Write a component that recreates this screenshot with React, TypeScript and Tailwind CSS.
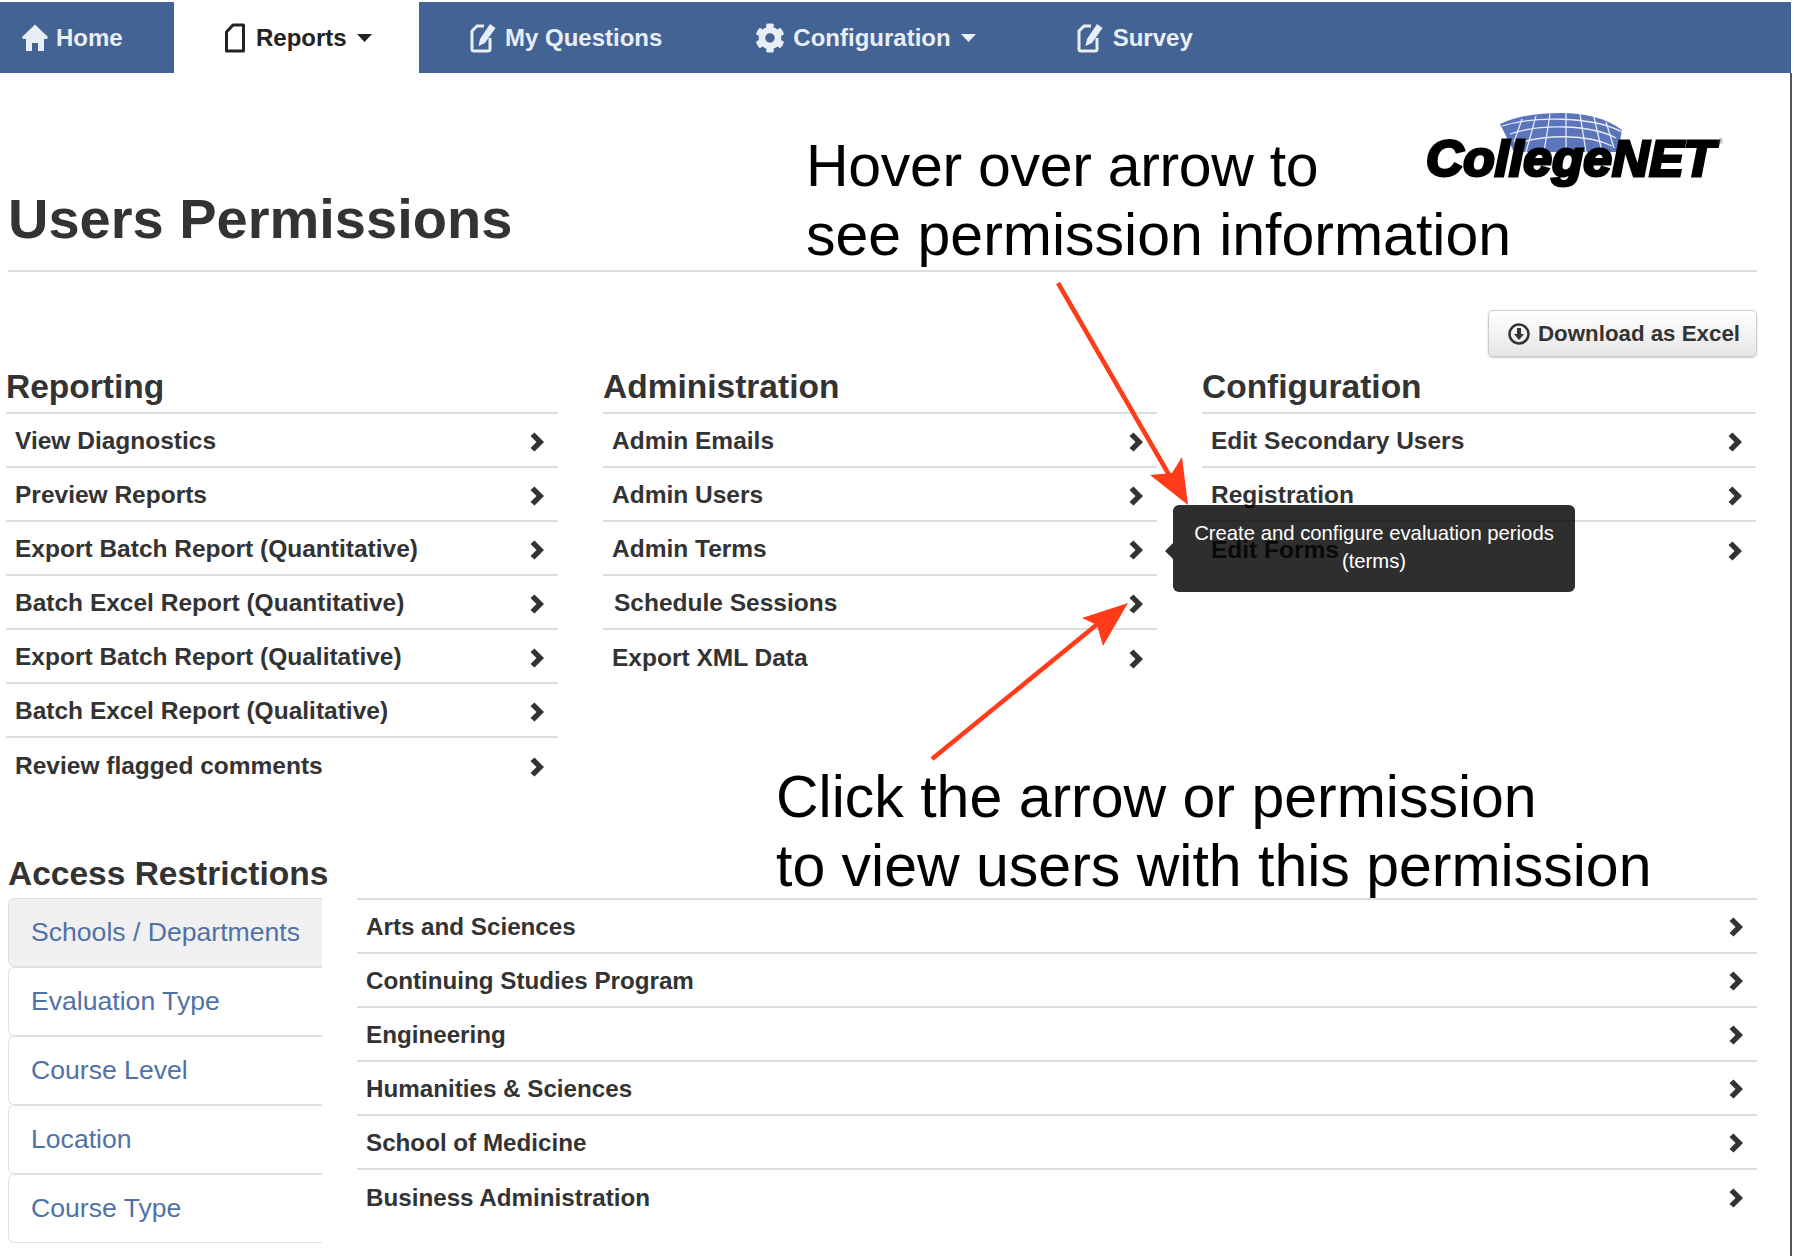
import React from "react";
import { FaCog } from "react-icons/fa";

const Chevron = ({ className }: { className: string }) => (
    <svg className={`w-[14px] h-[20px] shrink-0 ${className}`} viewBox="0 0 14 20">
        <path d="M0.500 4 4.500 0.500 14 10 4.500 19.500 0.500 16 6.500 10Z" fill="#333" />
    </svg>
);

const HomeIcon = () => (
    <svg className="w-[26px] h-[27px] mr-[8px]" viewBox="0 0 26 27">
        <path d="M13 0.500 26 13 25 15 22 15V27H16V19H10V27H4V15H1L0 13Z" fill="currentColor" />
    </svg>
);

const EditIcon = () => (
    <svg className="w-[26px] h-[30px]" viewBox="0 0 26 30" fill="none">
        <path d="M14 3H7L2 8V26a2 2 0 0 0 2 2H18a2 2 0 0 0 2-2V15" stroke="currentColor" strokeWidth="3" />
        <path d="M20 1 25.500 5 15 20 8.500 23 10 16Z" fill="currentColor" />
    </svg>
);

const ReportIcon = () => (
    <svg className="w-[22px] h-[30px]" viewBox="0 0 22 30" fill="none">
        <path d="M9 2H19.500V28H2.500V9Z" stroke="#222" strokeWidth="3" strokeLinejoin="round" />
    </svg>
);

const Caret = () => (
    <svg className="w-[15px] h-[8px] ml-[10px]" viewBox="0 0 15 8">
        <path d="M0 0H15L7.500 8Z" fill="currentColor" />
    </svg>
);

const NavTab = ({
    icon,
    label,
    caret,
    className,
}: {
    icon: React.ReactNode;
    label: string;
    caret?: boolean;
    className: string;
}) => (
    <div className={`flex items-center h-full ${className}`}>
        {icon}
        <span className="text-[24px] font-bold">{label}</span>
        {caret && <Caret />}
    </div>
);

const Row = ({
    label,
    indent,
    last,
    size,
    chevron,
}: {
    label: string;
    indent?: boolean;
    last?: boolean;
    size: string;
    chevron: string;
}) => (
    <div
        className={`flex items-center justify-between h-[54px] pl-[9px] pr-[14px] font-bold text-[#333] ${size} ${
            last ? "" : "border-b-2 border-[#ddd]"
        }`}
    >
        <span className={`mt-[3px] ${indent ? "ml-[2px]" : ""}`}>{label}</span>
        <Chevron className={chevron} />
    </div>
);

const columns = [
    {
        title: "Reporting",
        width: "w-[552px]",
        items: [
            "View Diagnostics",
            "Preview Reports",
            "Export Batch Report (Quantitative)",
            "Batch Excel Report (Quantitative)",
            "Export Batch Report (Qualitative)",
            "Batch Excel Report (Qualitative)",
            "Review flagged comments",
        ],
    },
    {
        title: "Administration",
        width: "w-[554px]",
        items: ["Admin Emails", "Admin Users", "Admin Terms", "Schedule Sessions", "Export XML Data"],
    },
    {
        title: "Configuration",
        width: "w-[554px]",
        items: ["Edit Secondary Users", "Registration", "Edit Forms"],
    },
];

const sideTabs = ["Schools / Departments", "Evaluation Type", "Course Level", "Location", "Course Type"];

const schools = [
    "Arts and Sciences",
    "Continuing Studies Program",
    "Engineering",
    "Humanities & Sciences",
    "School of Medicine",
    "Business Administration",
];

const Logo = () => (
    <div className="absolute left-[1423px] top-[112px] w-[304px] h-[78px]">
        <svg className="absolute left-[77px] top-0 w-[124px] h-[40px]" viewBox="0 0 124 40" fill="none">
            <path d="M0 12C20 3 40 1 62 1s44 5 60 17L118 40H14Z" fill="#5c74ba" />
            <g stroke="#e6eaf6" strokeWidth="1.300">
                <path d="M2 14C34 4 92 4 122 20M10 22C40 12 90 12 116 26M16 32C44 22 88 22 112 34" />
                <path d="M66 1V40M50 2 44 40M36 4 26 40M22 7 14 30M80 2 86 40M94 5 102 40M106 10 114 36" />
            </g>
        </svg>
        <span className="absolute left-[3px] top-[18px] text-[50px] leading-[58px] font-bold italic origin-left scale-x-[1.03] text-black [-webkit-text-stroke:3px_black] whitespace-nowrap">
            CollegeNET
        </span>
        <span className="absolute left-[295px] top-[26px] text-[7px] leading-[8px] text-[#777]">®</span>
    </div>
);

const Arrows = () => (
    <svg className="absolute left-0 top-0 w-[1794px] h-[1256px] pointer-events-none" viewBox="0 0 1794 1256" fill="none">
        <path d="M1058 283 1172 480" stroke="#ff3b1a" strokeWidth="4.500" />
        <path d="M1188 505 1150 475 1172 473 1182 457Z" fill="#ff3b1a" />
        <path d="M932 759 1100 622" stroke="#ff3b1a" strokeWidth="4.500" />
        <path d="M1128 603 1082 618 1097 625 1103 646Z" fill="#ff3b1a" />
    </svg>
);

const App = () => {
    return (
        <div
            className="relative w-[1794px] h-[1256px] overflow-hidden bg-white text-[#333]"
            style={{ fontFamily: '"Liberation Sans", Arial, sans-serif' }}
        >
            {/* Top nav */}
            <nav className="flex w-[1791px] h-[71px] mt-[2px] bg-[#446395] text-[#e8eef5]">
                <NavTab icon={<HomeIcon />} label="Home" className="w-[174px] pl-[22px]" />
                <NavTab
                    icon={<span className="mr-[10px] flex"><ReportIcon /></span>}
                    label="Reports"
                    caret
                    className="w-[245px] pl-[50px] bg-white text-[#222]"
                />
                <NavTab
                    icon={<span className="mr-[9px] flex"><EditIcon /></span>}
                    label="My Questions"
                    className="pl-[51px] pr-[47px]"
                />
                <NavTab
                    icon={<FaCog className="w-[30px] h-[30px] mr-[8px]" />}
                    label="Configuration"
                    caret
                    className="pl-[46px] pr-[50px]"
                />
                <NavTab
                    icon={<span className="mr-[10px] flex"><EditIcon /></span>}
                    label="Survey"
                    className="pl-[51px]"
                />
            </nav>

            <div className="w-[1792px] h-[1183px] border-r-2 border-[#555]">
                {/* Page title */}
                <div className="ml-[8px] w-[1749px] h-[199px] flex items-end border-b-2 border-[#ddd] pb-[19px]">
                    <h1 className="text-[56px] leading-[64px] font-bold text-[#333]">Users Permissions</h1>
                </div>

                <div className="flex justify-end w-[1757px] mt-[38px]">
                    <button className="flex items-center gap-[8px] w-[269px] h-[47px] pl-[19px] rounded-[5px] border border-[#ccc] bg-gradient-to-b from-white to-[#e6e6e6] shadow-[0_1px_2px_rgba(0,0,0,0.2)] text-[#333]">
                        <svg className="w-[22px] h-[22px]" viewBox="0 0 22 22" fill="none">
                            <circle cx="11" cy="11" r="9.500" stroke="#333" strokeWidth="2.500" />
                            <path d="M9 5h4v6h3l-5 6-5-6h3Z" fill="#333" />
                        </svg>
                        <span className="text-[22.3px] font-bold">Download as Excel</span>
                    </button>
                </div>

                {/* Permission columns */}
                <div className="flex gap-[45px] pl-[6px] mt-[3px] h-[430px]">
                    {columns.map((col) => (
                        <div key={col.title} className={col.width}>
                            <h3 className="h-[54px] pt-[8px] text-[33.5px] leading-[38px] font-bold text-[#333] border-b-2 border-[#ddd]">
                                {col.title}
                            </h3>
                            {col.items.map((item, i) => (
                                <Row
                                    key={item}
                                    label={item}
                                    size="text-[24.5px]"
                                    chevron="mt-[4px]"
                                    indent={item === "Schedule Sessions"}
                                    last={i === col.items.length - 1}
                                />
                            ))}
                        </div>
                    ))}
                </div>

                {/* Access restrictions */}
                <h3 className="ml-[8px] mt-[56px] h-[52px] pt-[9px] text-[33.5px] leading-[38px] font-bold text-[#333]">
                    Access Restrictions
                </h3>
                <div className="flex ml-[8px] w-[1749px]">
                    <div className="w-[314px]">
                        {sideTabs.map((tab, i) => (
                            <div
                                key={tab}
                                className={`flex items-center h-[69px] pl-[22px] text-[26.6px] text-[#4f72a6] border-[1.5px] border-r-0 border-[#e0e0e0] rounded-l-[6px] ${
                                    i === 0 ? "bg-[#f0f0f0]" : "bg-white"
                                }`}
                            >
                                {tab}
                            </div>
                        ))}
                    </div>
                    <div className="ml-[35px] flex-1 border-t-2 border-[#ddd]">
                        {schools.map((school, i) => (
                            <Row
                                key={school}
                                label={school}
                                size="text-[24.2px]"
                                chevron="mt-[1px]"
                                last={i === schools.length - 1}
                            />
                        ))}
                    </div>
                </div>
            </div>

            <Logo />

            {/* Annotations */}
            <div className="absolute left-[806px] top-[132px] text-[59px] leading-[69px] text-black whitespace-nowrap">
                <span className="tracking-[-0.3px]">Hover over arrow to</span>
                <br />
                see permission information
            </div>
            <div className="absolute left-[776px] top-[763px] text-[59px] leading-[69px] text-black whitespace-nowrap">
                Click the arrow or permission
                <br />
                to view users with this permission
            </div>
            <Arrows />

            {/* Tooltip */}
            <div className="absolute left-[1173px] top-[505px] w-[402px] h-[87px] rounded-[6px] pb-[4px] bg-black/[.82] flex items-center justify-center text-center text-[20.3px] leading-[28px] text-white">
                <span className="absolute left-[-8px] top-[38px] w-0 h-0 border-y-[8px] border-y-transparent border-r-[8px] border-r-black/[.82]" />
                <span>
                    Create and configure evaluation periods
                    <br />
                    (terms)
                </span>
            </div>
        </div>
    );
};

export default App;
